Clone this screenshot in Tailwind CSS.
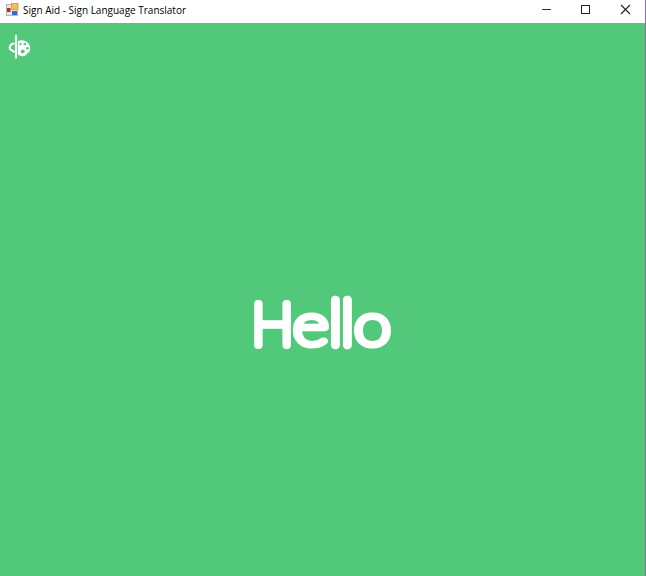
<!DOCTYPE html>
<html lang="en">
<head>
<meta charset="utf-8">
<title>Sign Aid - Sign Language Translator</title>
<script src="https://cdn.jsdelivr.net/npm/@tailwindcss/browser@4"></script>
</head>
<body class="h-screen overflow-hidden bg-[#52c97a]">
<div class="flex h-screen flex-col border-r border-[#9068a8]">
  <header class="flex h-[23px] shrink-0 items-start bg-white">
    <svg class="ml-[6px] mt-[3px] size-[13px] shrink-0" viewBox="0 0 13 13">
      <rect x=".5" y="1.5" width="11" height="11" fill="#e8e8ec" stroke="#b5b5bd"/>
      <rect x="1" y="5" width="3.5" height="4" fill="#c1272d"/>
      <rect x="5.5" y="0.5" width="6.5" height="6" fill="#f5c044" stroke="#c99a3a" stroke-width=".8"/>
      <rect x="6" y="8" width="5" height="4" fill="#3b68c9"/>
    </svg>
    <h1 class="ml-[4px] mt-[3px] whitespace-nowrap font-['Open_Sans','Noto_Sans',sans-serif] text-[10px] leading-[14px] text-black"><svg class="block h-[14px] w-[170px]"><text x="0" y="11" textLength="163" lengthAdjust="spacingAndGlyphs" fill="#000">Sign Aid - Sign Language Translator</text></svg></h1>
    <div class="ml-auto flex h-[20px]">
      <svg class="h-[20px] w-[39px]" viewBox="0 0 39 20"><path d="M15 9.5h9" stroke="#333"/></svg>
      <svg class="h-[20px] w-[39px]" viewBox="0 0 39 20"><rect x="15.5" y="5.5" width="8" height="8" fill="none" stroke="#222"/></svg>
      <svg class="h-[20px] w-[40px]" viewBox="0 0 40 20"><path d="M16 5l9 9M25 5l-9 9" stroke="#222" stroke-width="1.1"/></svg>
    </div>
  </header>
  <main class="flex grow flex-col">
    <svg class="ml-[8px] mt-[10px] h-[28px] w-[24px]" viewBox="0 0 24 28">
      <path d="M9.8 8C16 5.4 22.2 9.6 22.2 15.5C22.2 18.2 21 19.8 19.2 20.2C18 24 13 24 9.8 21.5Z" fill="#fff"/>
      <path d="M6.5 10.5C3 10.6 1.6 12.8 1.8 15C2 17.8 4.3 16.6 6.5 19.2" fill="none" stroke="#fff" stroke-width="2.2"/>
      <g fill="#52c97a"><circle cx="12.4" cy="11.1" r="1.2"/><circle cx="16.8" cy="11.1" r="1.3"/><circle cx="19.4" cy="15.2" r="1.3"/><circle cx="14.8" cy="18.4" r="1.9"/></g>
      <path d="M8 1C6.6 3 6.5 5 7.1 7L6.9 25.5H9.1L8.9 7C9.5 5 9.4 3 8 1Z" fill="#fff"/>
    </svg>
    <svg class="mx-auto mt-[224px] h-[80px] w-[165px] font-['Lato','Liberation_Sans',sans-serif] text-[58px] font-thin" viewBox="240 285 165 80" role="img">
      <g fill="#fff" stroke="#fff" stroke-width="8" stroke-linejoin="round" stroke-linecap="round">
        <text transform="translate(251.5 344.8) scale(.97 1)">H</text>
        <text transform="translate(292.7 345.3) scale(1.2 1)" stroke-width="7">e</text>
        <text transform="translate(329.2 344.7) scale(1.02 1.06)">l</text>
        <text transform="translate(341.2 344.7) scale(1.02 1.06)">l</text>
        <text transform="translate(354.1 345.3) scale(1.16 1)" stroke-width="7">o</text>
      </g>
    </svg>
  </main>
</div>
</body>
</html>
